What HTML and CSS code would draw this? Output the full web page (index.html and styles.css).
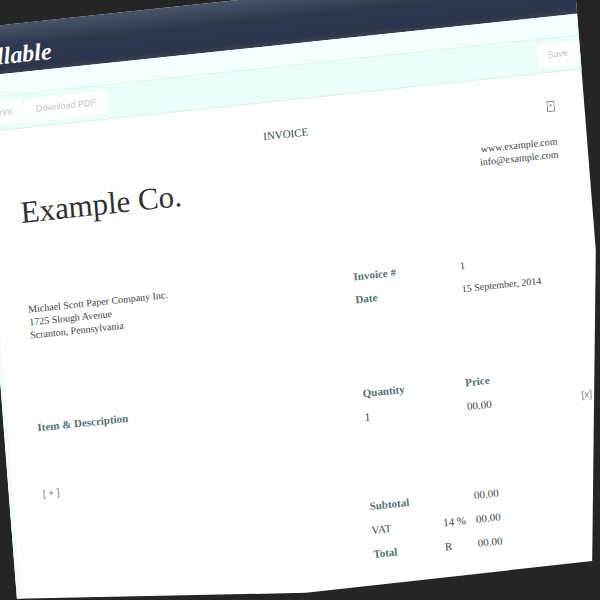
FILE: index.html
```html
<!DOCTYPE html>
<html lang="en">
<head>
<meta charset="utf-8">
<title>Billable</title>
<link rel="stylesheet" href="styles.css">
</head>
<body>
<div class="scene">
  <div class="sheet">
    <header class="masthead"><a class="logo" href="#">Billable</a></header>
    <div class="strip"></div>
    <nav class="toolbar">
      <button class="tool" type="button">Print</button>
      <button class="tool tool-wide" type="button">Download PDF</button>
      <button class="tool tool-save" type="button">Save</button>
    </nav>
    <main class="paper">
      <div class="title-row">
        <h1 class="title">INVOICE</h1>
        <button class="add-logo" type="button" aria-label="Add logo">
          <svg viewBox="0 0 8 11" width="8" height="11"><path d="M.5.5h7v10h-7z" fill="none" stroke="#858585"/><path d="M3 4.500h2M4 3v3" fill="none" stroke="#999"/></svg>
        </button>
      </div>
      <address class="contact">www.example.com<br>info@example.com</address>
      <h2 class="company">Example Co.</h2>
      <div class="details">
        <address class="client">Michael Scott Paper Company Inc.<br>1725 Slough Avenue<br>Scranton, Pennsylvania</address>
        <dl class="meta">
          <dt>Invoice #</dt><dd>1</dd>
          <dt>Date</dt><dd>15 September, 2014</dd>
        </dl>
      </div>
      <table class="items">
        <thead>
          <tr><th>Item &amp; Description</th><th class="qty">Quantity</th><th class="price">Price</th><th class="drop"></th></tr>
        </thead>
        <tbody>
          <tr><td></td><td>1</td><td>00.00</td><td><button class="mark" type="button">[x]</button></td></tr>
        </tbody>
      </table>
      <button class="mark add" type="button">[ + ]</button>
      <table class="totals">
        <tbody>
          <tr><th>Subtotal</th><td class="unit"></td><td class="sum">00.00</td></tr>
          <tr><th class="plain">VAT</th><td>14 %</td><td>00.00</td></tr>
          <tr><th>Total</th><td>R</td><td>00.00</td></tr>
        </tbody>
      </table>
    </main>
  </div>
</div>
</body>
</html>
```
FILE: styles.css
```css
* { box-sizing: border-box; }

body {
  margin: 0;
  background: #252525;
  font-family: "Liberation Serif", Georgia, serif;
  font-size: 11px;
  line-height: 13px;
  color: #3c3e40;
}

h1, h2, dl, dd { margin: 0; }
address { font-style: normal; }

button {
  padding: 0;
  border: 0;
  background: none;
  font: inherit;
  color: inherit;
}

/* The dark desk, with the sheet's uneven outline cut out of it */
.scene {
  display: flow-root;
  height: 100vh;
  overflow: hidden;
  clip-path: polygon(0 4.2%, 38% 0, 96% 0, 99.3% 41.7%, 98.7% 93.5%, 51% 98.8%, 2.7% 99.8%, 0 63.5%);
}

.sheet {
  width: 101%;
  margin: 28px 0 0 -28px;
  background: #fff;
  transform: rotate(-6deg) skewX(-1.5deg);
  transform-origin: 0 0;
}

.masthead {
  display: flex;
  align-items: center;
  height: 49px;
  background: linear-gradient(#485468, #2d384e 45%, #2b364c 90%, #3a4350);
}

.logo {
  font-size: 24px;
  line-height: 28px;
  font-weight: bold;
  font-style: italic;
  color: #fff;
  text-decoration: none;
  padding-top: 12px;
}

.strip { height: 21px; background: #f3fffe; }

.toolbar {
  display: flex;
  align-items: center;
  gap: 2px;
  height: 35px;
  padding: 0 4px;
  background: #ebfefa;
  border-top: 1px solid #e0f3f0;
  border-bottom: 1px solid #dceeea;
}

.tool {
  width: 40px;
  height: 24px;
  background: #fdfffe;
  border-radius: 2px;
  font-family: "Liberation Sans", Arial, sans-serif;
  font-size: 9px;
  color: #bcc8c6;
}
.tool-wide { width: 83px; }
.tool-save { margin-left: auto; }

.paper {
  min-height: 560px;
  padding: 27px 31px 0 30px;
  border-left: 4px solid #effcfa;
}

.title-row {
  display: grid;
  grid-template-columns: 1fr auto 1fr;
  align-items: center;
}
.title {
  grid-column: 2;
  font-size: 11px;
  font-weight: normal;
  color: #2d4a4c;
}
.add-logo { justify-self: end; line-height: 0; }

.contact, .client, .meta dd { font-size: 10px; }
.contact { margin-top: 22px; text-align: right; }

.company {
  margin-top: -22px;
  font-size: 31px;
  line-height: 36px;
  font-weight: normal;
  color: #303132;
}

.details {
  display: grid;
  grid-template-columns: 1fr 214px;
  margin-top: 72px;
}
.meta {
  display: grid;
  grid-template-columns: 1fr 1fr;
  row-gap: 10px;
  align-content: start;
  padding-top: 2px;
}
.meta dt, th { font-weight: bold; color: #517472; }

table { border-collapse: collapse; table-layout: fixed; }
th, td { padding: 0; text-align: left; vertical-align: top; height: 24px; }

.items {
  width: calc(100% + 18px);
  margin-top: 80px;
}
.qty { width: 103px; }
.price { width: 115px; }
.drop { width: 14px; }

.mark { font-family: "Liberation Sans", Arial, sans-serif; font-size: 10px; color: #808284; }
.add { display: block; margin-top: 18px; }

.totals { width: 216px; margin: 34px 0 0 auto; }
.unit { width: 33px; }
.sum { width: 111px; }
.totals .plain { font-weight: normal; color: #3e5356; }
```
